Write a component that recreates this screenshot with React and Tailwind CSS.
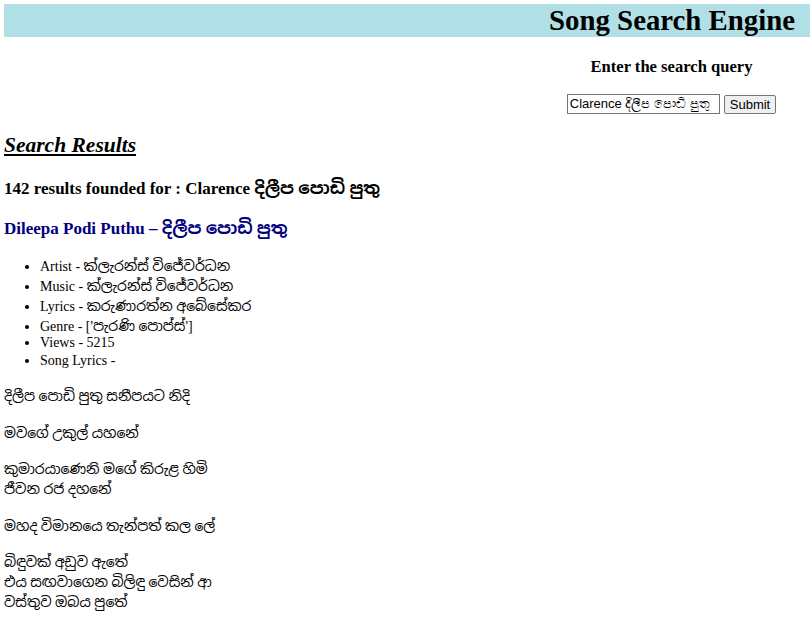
import React from "react";

const lyrics = [
  ["දිලීප පොඩි පුතු සනීපයට නිදි"],
  ["මවගේ උකුල් යහනේ"],
  ["කුමාරයාණෙනි මගේ කිරුළ හිමි", "ජීවන රජ දහනේ"],
  ["මහද විමානයෙ තැන්පත් කල ලේ"],
  ["බිඳුවක් අඩුව ඇතේ", "එය සඟවාගෙන බිලිඳු වෙසින් ආ", "වස්තුව ඔබය පුතේ"],
];

export default function App() {
  return (
    <div className="min-h-screen bg-white pt-1 pl-1 text-black font-['Liberation_Serif','Noto_Sans_Sinhala','Noto_Serif_Sinhala',serif]">
      {/* Header bar */}
      <div className="bg-[#b0e0e6] h-[33px] flex items-center justify-end pr-[15px]">
        <h1 className="text-[28.8px] font-bold leading-none">Song Search Engine</h1>
      </div>

      {/* Search form */}
      <div className="flex justify-end">
        <div className="w-[277px] text-center">
          <h3 className="text-[16.6px] font-bold mt-[20px] leading-[20px]">Enter the search query</h3>
          <form className="mt-[17px] h-[20px] flex justify-center items-center gap-[4px]" onSubmit={(e) => e.preventDefault()}>
            <input
              type="text"
              defaultValue="Clarence දිලීප පොඩි පුතු"
              className="w-[153px] h-[20px] border border-[#767676] px-[2px] text-[13px] font-['Liberation_Sans',sans-serif] text-black"
            />
            <button
              type="submit"
              className="h-[19px] px-[5px] border border-[#767676] rounded-[2px] bg-[#efefef] text-[13px] leading-none font-['Liberation_Sans',sans-serif]"
            >
              Submit
            </button>
          </form>
        </div>
      </div>

      {/* Results */}
      <h2 className="mt-[18px] text-[21.5px] font-bold italic underline leading-[26px]">Search Results</h2>
      <h3 className="mt-[20px] text-[17px] font-bold leading-[22px]">142 results founded for : Clarence දිලීප පොඩි පුතු</h3>
      <h3 className="mt-[18px] text-[17px] font-bold leading-[22px] text-[#000080]">Dileepa Podi Puthu – දිලීප පොඩි පුතු</h3>

      <ul className="mt-[17px] pl-[36px] list-disc text-[14px] leading-[20px]">
        <li>Artist - ක්ලැරන්ස් විජේවර්ධන</li>
        <li>Music - ක්ලැරන්ස් විජේවර්ධන</li>
        <li>Lyrics - කරුණාරත්න අබේසේකර</li>
        <li>Genre - ['පැරණි පොප්ස්']</li>
        <li className="-mt-[4px]">Views - 5215</li>
        <li className="-mt-[2px]">Song Lyrics -</li>
      </ul>

      <div className="text-[14px] leading-[20px] mt-[16px]">
        {lyrics.map((p, i) => (
          <p key={i} className="mb-[16.5px]">
            {p.map((l, j) => (
              <React.Fragment key={j}>
                {l}
                {j < p.length - 1 && <br />}
              </React.Fragment>
            ))}
          </p>
        ))}
      </div>
    </div>
  );
}
